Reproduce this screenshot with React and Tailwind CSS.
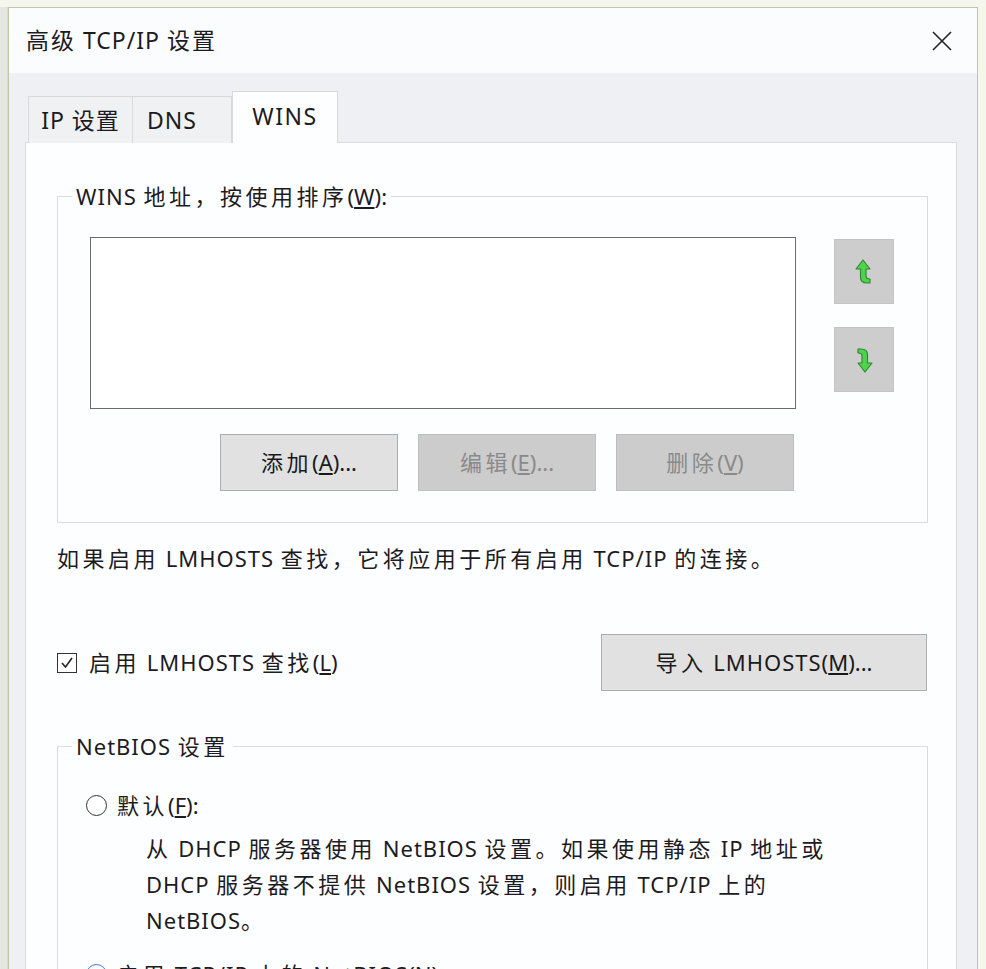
import React from 'react';

const font = { fontFamily: '"Noto Sans", "Noto Sans CJK SC", sans-serif' };

const CJK = /([\u3000-\u303f\u4e00-\u9fff\uff00-\uffef]+)/;

// widen the CJK runs, the screenshot's YaHei is set looser than Noto
const T = ({ s, wide = 'tracking-[3.5px]' }) => (
    <>
        {s.split(CJK).map((part, i) =>
            CJK.test(part) ? <span key={i} className={wide}>{part}</span> : <span key={i} className="tracking-[1px]">{part}</span>
        )}
    </>
);

const MoveButton = ({ dir }) => (
    <button className="w-[60px] h-[65px] bg-[#cdcdcd] border border-[#c4c4c4] flex items-center justify-center">
        <svg width="20" height="28" viewBox="0 0 20 28">
            {dir === 'up' ? (
                <path d="M9 2 L2 11 L6.5 11 L6.5 19 Q6.5 25 13 25 L16 25 L16 21 Q12 21 12 18 L12 11 L16 11 Z" fill="#4fd34f" stroke="#2f8a2f" strokeWidth="1.2" strokeLinejoin="round" />
            ) : (
                <path d="M11 26 L18 17 L13.5 17 L13.5 9 Q13.5 3 7 3 L4 3 L4 7 Q8 7 8 10 L8 17 L4 17 Z" fill="#4fd34f" stroke="#2f8a2f" strokeWidth="1.2" strokeLinejoin="round" />
            )}
        </svg>
    </button>
);

const Btn = ({ children, disabled, className = '' }) => (
    <button
        className={`h-[57px] text-[22px] flex items-center justify-center border ${disabled ? 'bg-[#cccccc] border-[#bfbfbf] text-[#8a8a8a]' : 'bg-[#e1e1e1] border-[#adadad] text-[#1a1a1a]'} ${className}`}
    >
        <span>{children}</span>
    </button>
);

export default function App() {
    return (
        <div className="w-[986px] h-[969px] overflow-hidden bg-[#f5f6ee] flex pt-[7px] text-[#1d1b22]" style={font}>
            {/* left strip of window behind */}
            <div className="w-[8px] shrink-0 bg-[#e4e6e3] border-r border-[#d8dccf]"></div>

            {/* Dialog window */}
            <div className="w-[970px] shrink-0 border-l border-r border-t border-[#c3c6a4] bg-[#eef0f3] flex flex-col">
                {/* Title bar */}
                <div className="h-[65px] shrink-0 bg-[#fbfcfe] flex items-center justify-between pl-[17px] pr-[24px]">
                    <span className="text-[23px]"><T s="高级 TCP/IP 设置" wide="tracking-[2px]" /></span>
                    <svg width="22" height="22" viewBox="0 0 22 22">
                        <path d="M2 2 L20 20 M20 2 L2 20" stroke="#222" strokeWidth="1.6" />
                    </svg>
                </div>

                {/* Body */}
                <div className="flex-1 flex flex-col pl-[16px] pr-[20px] pt-[18px]">
                    {/* Tabs */}
                    <div className="flex items-end pl-[3px] h-[52px] relative z-10 -mb-[1px]">
                        <div className="w-[105px] h-[47px] bg-[#eff1f3] border border-[#d9d9d9] border-b-0 flex items-center justify-center text-[23px]"><span><T s="IP 设置" wide="tracking-[1px]" /></span></div>
                        <div className="w-[99px] h-[47px] bg-[#eff1f3] border border-[#d9d9d9] border-l-0 border-b-0 flex items-center justify-start pl-[14px] text-[23px] tracking-[1px]">DNS</div>
                        <div className="w-[106px] h-[52px] bg-[#fdfeff] border border-[#d9d9d9] border-b-0 flex items-start justify-center pt-[7px] text-[23px] tracking-[1.5px]">WINS</div>
                    </div>

                    {/* Tab panel */}
                    <div className="flex-1 bg-[#fdfeff] border border-[#d9dbdf] pl-[31px] pr-[28px] pt-[40px]">
                        <fieldset className="border border-[#dcdcdc] w-[871px] h-[340px]">
                            <legend className="ml-[14px] px-[4px] text-[22px] leading-[26px]">
                                <T s="WINS 地址，按使用排序" />(<u>W</u>):
                            </legend>
                            <div className="pt-[28px] pl-[32px]">
                                <div className="flex">
                                    <div className="w-[706px] h-[172px] border border-[#6b6b6b] bg-white"></div>
                                    <div className="flex flex-col gap-[23px] ml-[38px] pt-[2px]">
                                        <MoveButton dir="up" />
                                        <MoveButton dir="down" />
                                    </div>
                                </div>
                                <div className="flex gap-[20px] ml-[130px] mt-[25px]">
                                    <Btn className="w-[178px]"><T s="添加" />(<u>A</u>)...</Btn>
                                    <Btn disabled className="w-[178px]"><T s="编辑" />(<u>E</u>)...</Btn>
                                    <Btn disabled className="w-[178px]"><T s="删除" />(<u>V</u>)</Btn>
                                </div>
                            </div>
                        </fieldset>

                        <p className="text-[22px] mt-[20px] leading-[30px]">
                            <T s="如果启用 LMHOSTS 查找，它将应用于所有启用 TCP/IP 的连接。" />
                        </p>

                        <div className="flex items-center justify-between mt-[61px] w-[870px]">
                            <label className="flex items-center gap-[12px] text-[22px]">
                                <span className="w-[20px] h-[20px] border border-[#333] flex items-center justify-center bg-white">
                                    <svg width="16" height="16" viewBox="0 0 16 16">
                                        <path d="M3 8 L6.5 12 L13 3" fill="none" stroke="#222" strokeWidth="1.6" />
                                    </svg>
                                </span>
                                <span><T s="启用 LMHOSTS 查找" />(<u>L</u>)</span>
                            </label>
                            <Btn className="w-[326px]"><T s="导入 LMHOSTS" />(<u>M</u>)...</Btn>
                        </div>

                        <fieldset className="border border-[#dcdcdc] w-[871px] h-[300px] mt-[42px]">
                            <legend className="ml-[14px] px-[4px] text-[22px] leading-[26px]"><T s="NetBIOS 设置" /></legend>
                            <div className="pt-[30px] pl-[28px]">
                                <label className="flex items-center gap-[10px] text-[22px]">
                                    <span className="w-[21px] h-[21px] rounded-full border border-[#333] bg-white"></span>
                                    <span><T s="默认" />(<u>F</u>):</span>
                                </label>
                                <p className="ml-[60px] mt-[8px] text-[22px] leading-[36px]">
                                    <T s="从 DHCP 服务器使用 NetBIOS 设置。如果使用静态 IP 地址或" /><br />
                                    <T s="DHCP 服务器不提供 NetBIOS 设置，则启用 TCP/IP 上的" /><br />
                                    <T s="NetBIOS。" />
                                </p>
                                <label className="flex items-center gap-[10px] text-[22px] mt-[20px]">
                                    <span className="w-[21px] h-[21px] rounded-full border border-[#3a7bd5] bg-white flex items-center justify-center">
                                        <span className="w-[11px] h-[11px] rounded-full bg-[#1f1f1f]"></span>
                                    </span>
                                    <span><T s="启用 TCP/IP 上的 NetBIOS" />(<u>N</u>)</span>
                                </label>
                            </div>
                        </fieldset>
                    </div>
                </div>
            </div>
        </div>
    );
}
